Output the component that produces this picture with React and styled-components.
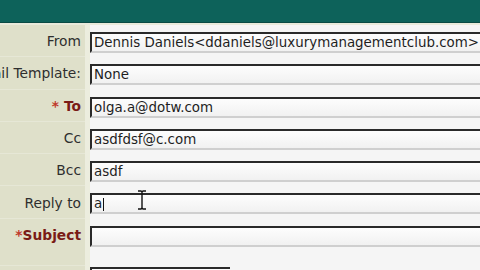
import React from 'react';
import styled, { createGlobalStyle } from 'styled-components';

const GlobalStyle = createGlobalStyle`
  html, body {
    margin: 0;
    padding: 0;
    width: 480px;
    height: 270px;
    overflow: hidden;
    background: #f4f4f4;
  }
`;

const SPage = styled.div`
  width: 480px;
  height: 270px;
  overflow: hidden;
  font-family: 'DejaVu Sans', Verdana, sans-serif;
`;

const SHeader = styled.div`
  height: 22px;
  background: #0d625a;
  border-bottom: 1px solid #0a4a44;
`;

const SHeaderRule = styled.div`
  height: 2px;
  background: #e9eadb;
`;

const SForm = styled.div`
  display: grid;
  grid-template-columns: 85px 1fr;
`;

const SLabel = styled.div`
  height: ${p => p.h || 32.3}px;
  display: flex;
  align-items: ${p => (p.top ? 'flex-start' : 'center')};
  justify-content: flex-end;
  padding-right: 4px;
  padding-top: ${p => (p.top ? 8 : 1)}px;
  box-sizing: border-box;
  overflow: hidden;
  white-space: nowrap;
  background: #dfe0ca;
  border-bottom: 1px solid #e6e7d6;
  font-size: 13.8px;
  color: ${p => (p.required ? '#7a1b16' : '#2e2e2e')};
  font-weight: ${p => (p.required ? 'bold' : 'normal')};
`;

const SStar = styled.span`
  color: #c0392b;
  margin-right: ${p => p.gap || 0}px;
`;

const SCell = styled.div`
  height: ${p => p.h || 32.3}px;
  padding: ${p => p.pad || 7}px 0 0 0;
  box-sizing: border-box;
  background: #f5f5f5;
  border-left: 5px solid #ecedde;
  position: relative;
`;

const SInput = styled.div`
  height: 21px;
  width: ${p => p.width || '400px'};
  box-sizing: border-box;
  border-top: 2px solid #2a2a2a;
  border-left: 2px solid #2a2a2a;
  border-bottom: 2px solid #cfcfcf;
  background: linear-gradient(#fdfdfd, #f1f1f1);
  padding: 1px 0 0 2px;
  font-size: 13.4px;
  line-height: 16px;
  color: #1e1e1e;
  white-space: nowrap;
  overflow: hidden;
  display: flex;
  align-items: center;
`;

const SCaret = styled.span`
  display: inline-block;
  width: 1px;
  height: 13px;
  background: #111;
  margin-left: 1px;
`;

const SPointer = styled.svg`
  position: absolute;
  left: 46px;
  top: 4px;
`;

const rows = [
  { label: 'From', value: 'Dennis Daniels<ddaniels@luxurymanagementclub.com>' },
  { label: 'Email Template:', value: 'None' },
  { label: 'To', required: true, value: 'olga.a@dotw.com', gap: 5 },
  { label: 'Cc', value: 'asdfdsf@c.com' },
  { label: 'Bcc', value: 'asdf' },
  { label: 'Reply to', value: 'a', caret: true },
  { label: 'Subject', required: true, value: '', gap: 0, h: 47, top: true },
];

function App() {
  return (
    <SPage>
      <GlobalStyle />
      <SHeader />
      <SHeaderRule />
      <SForm>
        {rows.map(r => (
          <React.Fragment key={r.label}>
            <SLabel required={r.required} h={r.h} top={r.top}>
              {r.required && <SStar gap={r.gap}>*</SStar>}
              {r.label}
            </SLabel>
            <SCell h={r.h}>
              <SInput>
                {r.value}
                {r.caret && <SCaret />}
              </SInput>
              {r.caret && (
                <SPointer width="12" height="20" viewBox="0 0 12 20">
                  <path d="M2 1h3l1 1 1-1h3M6 2v16M2 19h3l1-1 1 1h3" stroke="#111" strokeWidth="1.4" fill="none" />
                </SPointer>
              )}
            </SCell>
          </React.Fragment>
        ))}
        <SLabel />
        <SCell pad={1}>
          <SInput width="140px" />
        </SCell>
      </SForm>
    </SPage>
  );
}

export default App;
